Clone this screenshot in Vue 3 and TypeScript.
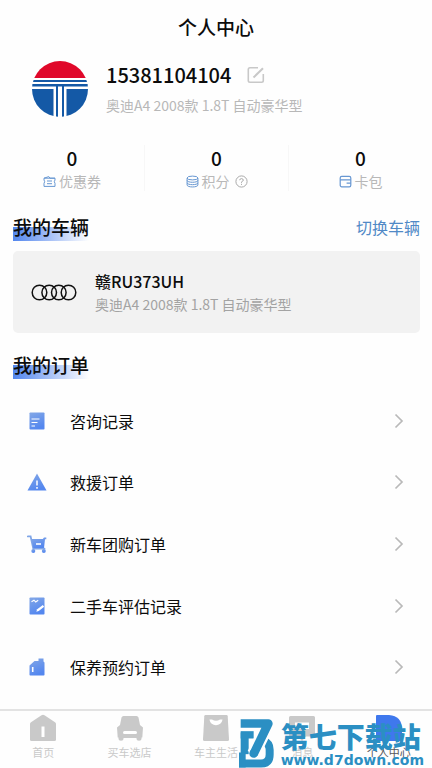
<script setup lang="ts">
interface Stat {
  id: string
  label: string
  value: number
  help?: boolean
}

interface Entry {
  id: string
  label: string
}

const user = { phone: '15381104104', car: '奥迪A4 2008款 1.8T 自动豪华型' }
const vehicle = { plate: '赣RU373UH', model: '奥迪A4 2008款 1.8T 自动豪华型' }

const stats: Stat[] = [
  { id: 'coupon', label: '优惠券', value: 0 },
  { id: 'points', label: '积分', value: 0, help: true },
  { id: 'cards', label: '卡包', value: 0 },
]

const orders: Entry[] = [
  { id: 'consult', label: '咨询记录' },
  { id: 'rescue', label: '救援订单' },
  { id: 'group', label: '新车团购订单' },
  { id: 'valuation', label: '二手车评估记录' },
  { id: 'maintain', label: '保养预约订单' },
]

const tabs: Entry[] = [
  { id: 'home', label: '首页' },
  { id: 'buy', label: '买车选店' },
  { id: 'life', label: '车主生活' },
  { id: 'message', label: '消息' },
  { id: 'me', label: '个人中心' },
]
const activeTab = 'me'
</script>

<template>
  <div class="page">
    <header class="top">
      <h1 class="title">个人中心</h1>
    </header>

    <section class="profile">
      <svg class="avatar" viewBox="0 0 56 56" aria-hidden="true">
        <defs>
          <clipPath id="avatar-clip"><circle cx="28" cy="28" r="28" /></clipPath>
        </defs>
        <g clip-path="url(#avatar-clip)">
          <rect width="56" height="56" fill="#fff" />
          <rect width="56" height="17" fill="#e0082a" />
          <g fill="#1459a6">
            <rect y="19" width="56" height="2" />
            <path d="M0 23H56V25.5H32V56H30V25.5H26V56H24V25.5H0Z" />
            <path d="M0 28H21.5V56H0Z" />
            <path d="M56 28H34.5V56H56Z" />
          </g>
        </g>
      </svg>
      <div class="who">
        <div class="phone-row">
          <span class="phone">{{ user.phone }}</span>
          <button class="edit" type="button" aria-label="编辑">
            <svg viewBox="0 0 18 18" fill="none" stroke="#c8c8c8" stroke-width="1.6">
              <path d="M11 1.8H3Q1.3 1.8 1.3 3.5V14.6Q1.3 16.3 3 16.3H14.6Q16.3 16.3 16.3 14.6V8" />
              <path d="M6.5 11.5L16 2.2" stroke-width="2" />
            </svg>
          </button>
        </div>
        <p class="user-car">{{ user.car }}</p>
      </div>
    </section>

    <section class="stats">
      <a v-for="s in stats" :key="s.id" class="stat" href="#">
        <strong class="stat-value">{{ s.value }}</strong>
        <span class="stat-label">
          <svg v-if="s.id === 'coupon'" class="stat-icon" viewBox="0 0 13 13" fill="none" stroke="#6797d2">
            <path d="M1 3.2V5Q2.4 6.7 1 8.4V11.4H12V8.4Q10.6 6.7 12 5V3.2H7L5.8 1.6L1 3.2H12" />
            <path d="M4 6H9M4 8.7H9" />
          </svg>
          <svg v-else-if="s.id === 'points'" class="stat-icon" viewBox="0 0 13 13" fill="none" stroke="#6797d2">
            <ellipse cx="6.5" cy="3" rx="5.4" ry="1.9" />
            <path d="M1.1 3V10C1.1 12.6 11.9 12.6 11.9 10V3" />
            <path d="M1.1 5.4C1.1 7.9 11.9 7.9 11.9 5.4M1.1 7.8C1.1 10.3 11.9 10.3 11.9 7.8" />
          </svg>
          <svg v-else class="stat-icon" viewBox="0 0 13 13" fill="none" stroke="#6797d2" stroke-width="1.2">
            <rect x="1.2" y="1.4" width="10.6" height="10.4" rx="1.6" />
            <path d="M1.2 4.8H11.8M7.6 8.2H11.8" />
          </svg>
          <span>{{ s.label }}</span>
          <svg v-if="s.help" class="stat-icon help" viewBox="0 0 13 13" fill="none" stroke="#a9a9a9">
            <circle cx="6.5" cy="6.5" r="5.6" />
            <path d="M4.7 5.2Q4.8 3.6 6.5 3.6T8.3 5.2Q8.2 6.1 6.5 6.9V7.8M6.5 8.8V9.9" />
          </svg>
        </span>
      </a>
    </section>

    <section class="block">
      <div class="block-head">
        <h2 class="heading">我的车辆</h2>
        <a class="switch" href="#">切换车辆</a>
      </div>
      <a class="vehicle" href="#">
        <svg class="rings" viewBox="0 0 46 17" fill="none" stroke="#111" stroke-width="1.5" aria-hidden="true">
          <circle cx="8.5" cy="8.5" r="7.3" />
          <circle cx="18.2" cy="8.5" r="7.3" />
          <circle cx="27.8" cy="8.5" r="7.3" />
          <circle cx="37.5" cy="8.5" r="7.3" />
        </svg>
        <span class="vehicle-text">
          <strong class="plate">{{ vehicle.plate }}</strong>
          <span class="model">{{ vehicle.model }}</span>
        </span>
      </a>
    </section>

    <section class="block orders">
      <div class="block-head">
        <h2 class="heading">我的订单</h2>
      </div>
      <svg class="defs" aria-hidden="true">
        <defs>
          <linearGradient id="icon-blue" x1="0" y1="0" x2="0.4" y2="1">
            <stop offset="0" stop-color="#84a8e6" />
            <stop offset="1" stop-color="#5487ef" />
          </linearGradient>
        </defs>
      </svg>
      <nav class="order-list" aria-label="我的订单">
        <a v-for="o in orders" :key="o.id" class="order" href="#">
          <svg class="order-icon" viewBox="0 0 20 20" fill="url(#icon-blue)" aria-hidden="true">
            <template v-if="o.id === 'consult'">
              <rect x="2.5" y="1.5" width="15" height="17" rx="0.8" />
              <path d="M4.5 8H12.5M4.5 11.5H10.5M4.5 15H8" stroke="#fff" stroke-width="1" />
            </template>
            <template v-else-if="o.id === 'rescue'">
              <path d="M10 1.5L19.5 18.5H0.5Z" />
              <path d="M10 8.5V13.5M10 15V16.8" stroke="#fff" stroke-width="1.5" />
            </template>
            <template v-else-if="o.id === 'group'">
              <path d="M0.8 2.4H3.6L6.3 14.7H17.5" fill="none" stroke="#7fa5e7" stroke-width="1.8" stroke-linecap="round" />
              <path d="M4.5 5H15.8L17 3.6H19.3V5.2H18L17 14H6.3Z" />
              <path d="M9 10H14" stroke="#fff" stroke-width="1.6" />
              <circle cx="6.3" cy="17" r="2" />
              <circle cx="16.8" cy="17" r="2" />
            </template>
            <template v-else-if="o.id === 'valuation'">
              <rect x="2.5" y="1.5" width="15" height="17" rx="0.8" />
              <path d="M4.5 5.8L7 4.2L8.7 6L11.2 4.2" fill="none" stroke="#fff" stroke-width="1.1" />
              <path d="M9.3 15.8L10.2 13.2L15.8 9L17.2 10.8L11.7 15Z" fill="#fff" />
            </template>
            <template v-else>
              <path d="M2.5 8.5L7.5 4H11.5V1.5H16.5V4.5L17.5 5.5V17.7Q17.5 18.5 16.7 18.5H3.3Q2.5 18.5 2.5 17.7Z" />
              <path d="M5.7 10V15" stroke="#fff" stroke-width="1.6" />
            </template>
          </svg>
          <span class="order-label">{{ o.label }}</span>
          <svg class="chevron" viewBox="0 0 10 16" fill="none" stroke="#b9b9b9" stroke-width="1.7" aria-hidden="true">
            <path d="M1.5 1.5L8 8L1.5 14.5" />
          </svg>
        </a>
      </nav>
    </section>

    <footer class="bottom">
      <nav class="tabs" aria-label="主导航">
        <a v-for="t in tabs" :key="t.id" class="tab" :class="{ active: t.id === activeTab }" href="#">
          <svg class="tab-icon" viewBox="0 0 28 28" fill="currentColor" aria-hidden="true">
            <template v-if="t.id === 'home'">
              <path d="M12.5 1.3Q14 0.4 15.5 1.3L26 8.2Q27 9 27 10V25.5Q27 27 25.5 27H2.5Q1 27 1 25.5V10Q1 9 2 8.2Z" />
              <path d="M14 12.5V23" stroke="#fff" stroke-width="3" />
            </template>
            <template v-else-if="t.id === 'buy'">
              <path d="M5.5 3.5Q6 2 7.5 2H20.5Q22 2 22.5 3.5L24 11L27 13.5L26.3 23.5H25.5V25Q25.5 26.8 23 26.8T20.5 25V24H7.5V25Q7.5 26.8 5 26.8T2.5 25V23.5H1.7L1 13.5L4 11Z" />
              <path d="M8.5 18.5H19.5" stroke="#fff" stroke-width="3" stroke-linecap="round" />
            </template>
            <template v-else-if="t.id === 'life'">
              <path d="M3.5 1H24.5Q25.6 1 25.7 2.2L27 25.5Q27 27 25.5 27H2.5Q1 27 1 25.5L2.3 2.2Q2.4 1 3.5 1Z" />
              <path d="M7.5 5.5H10Q14 8 18 5.5H20.5C19.5 13 8.5 13 7.5 5.5Z" fill="#fff" />
            </template>
            <template v-else-if="t.id === 'message'">
              <path d="M2.5 2H25.5Q27 2 27 3.5V21Q27 22.5 25.5 22.5H18L14 27L10 22.5H2.5Q1 22.5 1 21V3.5Q1 2 2.5 2Z" />
              <path d="M7 8.5H21V15H7Z" fill="#fff" />
            </template>
            <template v-else>
              <path d="M1 2Q1 1 2 1H14Q27 2 27 15V27H2Q1 27 1 26Z" />
            </template>
          </svg>
          <span class="tab-label">{{ t.label }}</span>
        </a>
      </nav>

      <div class="brand">
        <svg class="brand-mark" viewBox="0 0 105 146" fill="none" aria-hidden="true">
          <path d="M5 47H44" stroke="#2b8fc3" stroke-width="22" />
          <path d="M17 40V105" stroke="#2b8fc3" stroke-width="24" />
          <path d="M0 133H66Q92 133 92 106V92Q92 72 74 66" stroke="#2b8fc3" stroke-width="24" />
          <path d="M0 100V145H20V100Z" fill="#2b8fc3" />
          <path d="M5 13H88L44 104" stroke="#fefefe" stroke-width="40" stroke-linejoin="round" />
          <path d="M5 13H88L44 104" stroke="#2b8fc3" stroke-width="26" stroke-linejoin="round" />
          <circle cx="44" cy="103" r="13" fill="#2b8fc3" />
        </svg>
        <div class="brand-text">
          <span class="brand-name">第七下载站</span>
          <span class="brand-url">www.d7down.com</span>
        </div>
      </div>
    </footer>
  </div>
</template>

<style>
body {
  background: #fefefe;
}
</style>

<style scoped>
.page {
  display: flex;
  flex-direction: column;
  min-height: 100vh;
  color: #0c0c0c;
  font-family: "Noto Sans CJK SC", sans-serif;
}

.page * {
  box-sizing: border-box;
}

h1,
h2,
p {
  margin: 0;
}

a {
  color: inherit;
  text-decoration: none;
}

svg {
  display: block;
  flex: none;
}

.top {
  padding: 12px 16px 0;
  text-align: center;
}

.title {
  font-size: 19px;
  font-weight: 500;
  line-height: 30px;
}

.profile {
  display: flex;
  align-items: center;
  gap: 18px;
  padding: 17px 32px 0;
}

.avatar {
  width: 56px;
  height: 56px;
}

.phone-row {
  display: flex;
  align-items: center;
  gap: 16px;
}

.phone {
  font-size: 20px;
  font-weight: 500;
  line-height: 32px;
}

.edit {
  padding: 0;
  border: 0;
  background: none;
}

.edit svg {
  width: 18px;
  height: 18px;
}

.user-car {
  color: #b8b8b8;
  font-size: 14px;
  line-height: 28px;
}

.stats {
  display: grid;
  grid-template-columns: repeat(3, 1fr);
  padding: 26px 0 4px;
}

.stat {
  display: flex;
  flex-direction: column;
  align-items: center;
}

.stat + .stat {
  border-left: 1px solid #f7f7f7;
}

.stat-value {
  font-size: 19px;
  font-weight: 500;
  line-height: 26px;
}

.stat-label {
  display: flex;
  align-items: center;
  gap: 3px;
  color: #b8b8b8;
  font-size: 14px;
  line-height: 20px;
}

.stat-icon {
  width: 13px;
  height: 13px;
}

.help {
  margin-left: 2px;
}

.block {
  padding: 18px 12px 0 13px;
}

.block-head {
  display: flex;
  align-items: center;
  justify-content: space-between;
}

.heading {
  background: linear-gradient(to right, #5286ee, #a9c2f6 50%, #fefefe) no-repeat left bottom / 100% 14px;
  font-size: 19px;
  font-weight: 500;
  line-height: 28px;
}

.switch {
  color: #5089c6;
  font-size: 16px;
  line-height: 28px;
}

.vehicle {
  display: flex;
  align-items: center;
  gap: 18px;
  margin-top: 10px;
  padding: 18px;
  border-radius: 5px;
  background: #f2f2f2;
}

.rings {
  width: 46px;
  height: 17px;
}

.vehicle-text {
  display: flex;
  flex-direction: column;
}

.plate {
  font-size: 16px;
  font-weight: 500;
  line-height: 24px;
}

.model {
  color: #a3a3a3;
  font-size: 14px;
  line-height: 22px;
}

.orders {
  display: flex;
  flex: 1;
  flex-direction: column;
  padding-bottom: 11px;
}

.defs {
  position: absolute;
  width: 0;
  height: 0;
}

.order-list {
  display: grid;
  flex: 1;
  grid-auto-rows: 1fr;
  padding: 11px 16px 0 14px;
}

.order {
  display: flex;
  align-items: center;
  gap: 23px;
}

.order-icon {
  width: 20px;
  height: 20px;
}

.order-label {
  flex: 1;
  font-size: 16px;
  line-height: 24px;
}

.chevron {
  width: 10px;
  height: 16px;
}

.bottom {
  position: relative;
  border-top: 2px solid #e3e3e3;
}

.tabs {
  display: grid;
  grid-template-columns: repeat(5, 1fr);
  padding: 3px 0 8px;
}

.tab {
  display: flex;
  flex-direction: column;
  align-items: center;
  gap: 2px;
  color: #c9c9c9;
}

.tab-icon {
  width: 28px;
  height: 28px;
}

.tab-label {
  font-size: 11px;
  line-height: 16px;
}

.tab.active {
  color: #3f78ed;
}

.tab.active .tab-label {
  color: #55565c;
}

.brand {
  position: absolute;
  right: 8px;
  bottom: 0;
  display: flex;
  gap: 7px;
  color: #2b8fc3;
}

.brand-mark {
  width: 35px;
  height: 49px;
}

.brand-text {
  display: flex;
  flex-direction: column;
}

.brand-name {
  font-size: 28px;
  font-weight: 900;
  line-height: 34px;
}

.brand-url {
  font-family: "DejaVu Sans", sans-serif;
  font-size: 14px;
  font-weight: 700;
  line-height: 15px;
}
</style>
